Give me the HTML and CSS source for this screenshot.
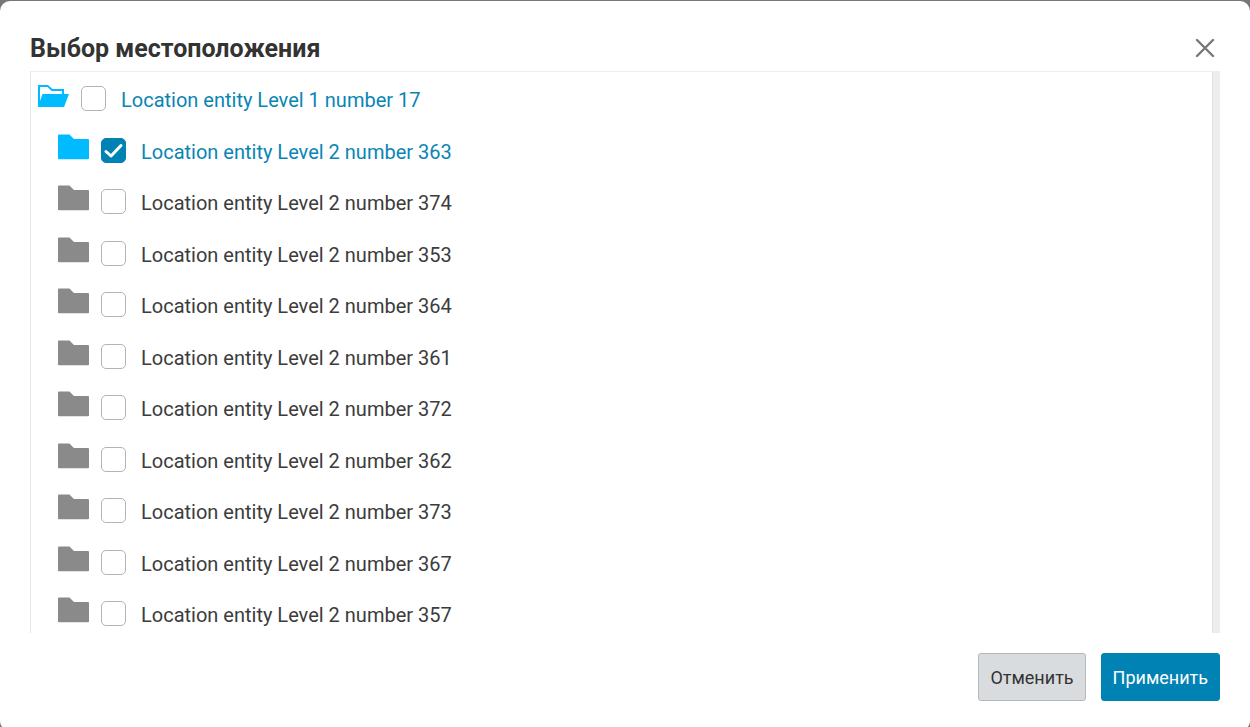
FILE: index.html
```html
<!DOCTYPE html>
<html lang="ru">
<head>
  <meta charset="UTF-8" />
  <meta name="viewport" content="width=device-width, initial-scale=1.0"/>
  <title>Выбор местоположения</title>
  <link rel="stylesheet" href="styles.css">
</head>
<body>
  <svg class="sprite" aria-hidden="true">
    <symbol id="folder" viewBox="0 0 31 26">
      <path d="M1 0.5H11.5L16 5H30Q31 5 31 6V24.5Q31 25.2 30 25.2H1Q0 25.2 0 24.5V1.5Q0 0.5 1 0.5Z" fill="currentColor"/>
    </symbol>
    <symbol id="folder-open" viewBox="0 0 31 26">
      <path d="M0 3H10L14.5 7H26V12H31L26 25H0ZM2 5V19L4.5 12H24V9H13.5L9.5 5Z" fill="currentColor" fill-rule="evenodd"/>
    </symbol>
  </svg>

  <div class="modal" role="dialog" aria-labelledby="title">
    <header class="modal-header">
      <h1 id="title">Выбор местоположения</h1>
      <button class="close" type="button" aria-label="Закрыть">
        <svg width="20" height="20" viewBox="0 0 20 20"><path d="M2 2L18 18M18 2L2 18" stroke="currentColor" stroke-width="2.4" stroke-linecap="round"/></svg>
      </button>
    </header>

    <div class="tree-box">
      <ul class="tree">
        <li>
          <div class="row selected">
            <svg class="icon"><use href="#folder-open"/></svg>
            <input type="checkbox" id="loc17"><label for="loc17">Location entity Level 1 number 17</label>
          </div>
          <ul class="children">
            <li class="row selected">
              <svg class="icon"><use href="#folder"/></svg>
              <input type="checkbox" id="loc363" checked><label for="loc363">Location entity Level 2 number 363</label>
            </li>
            <li class="row">
              <svg class="icon"><use href="#folder"/></svg>
              <input type="checkbox" id="loc374"><label for="loc374">Location entity Level 2 number 374</label>
            </li>
            <li class="row">
              <svg class="icon"><use href="#folder"/></svg>
              <input type="checkbox" id="loc353"><label for="loc353">Location entity Level 2 number 353</label>
            </li>
            <li class="row">
              <svg class="icon"><use href="#folder"/></svg>
              <input type="checkbox" id="loc364"><label for="loc364">Location entity Level 2 number 364</label>
            </li>
            <li class="row">
              <svg class="icon"><use href="#folder"/></svg>
              <input type="checkbox" id="loc361"><label for="loc361">Location entity Level 2 number 361</label>
            </li>
            <li class="row">
              <svg class="icon"><use href="#folder"/></svg>
              <input type="checkbox" id="loc372"><label for="loc372">Location entity Level 2 number 372</label>
            </li>
            <li class="row">
              <svg class="icon"><use href="#folder"/></svg>
              <input type="checkbox" id="loc362"><label for="loc362">Location entity Level 2 number 362</label>
            </li>
            <li class="row">
              <svg class="icon"><use href="#folder"/></svg>
              <input type="checkbox" id="loc373"><label for="loc373">Location entity Level 2 number 373</label>
            </li>
            <li class="row">
              <svg class="icon"><use href="#folder"/></svg>
              <input type="checkbox" id="loc367"><label for="loc367">Location entity Level 2 number 367</label>
            </li>
            <li class="row">
              <svg class="icon"><use href="#folder"/></svg>
              <input type="checkbox" id="loc357"><label for="loc357">Location entity Level 2 number 357</label>
            </li>
          </ul>
        </li>
      </ul>
      <div class="track"></div>
    </div>

    <footer class="modal-footer">
      <button class="btn" type="button">Отменить</button>
      <button class="btn primary" type="button">Применить</button>
    </footer>
  </div>
</body>
</html>
```
FILE: styles.css
```css
* {
  box-sizing: border-box;
}
body {
  margin: 0;
  padding-top: 1px;
  height: 100vh;
  overflow: hidden;
  background: #777;
  color: #333;
  font-family: Roboto, sans-serif;
  font-size: 20px;
}
.sprite {
  display: none;
}
.modal {
  padding: 30px;
  background: #fff;
  border-radius: 10px;
}
.modal-header {
  display: flex;
  justify-content: space-between;
  align-items: center;
  height: 40px;
  padding-bottom: 6px;
}
h1 {
  margin: 0;
  padding-top: 2px;
  font-size: 25px;
  line-height: 32px;
  font-weight: 700;
}
.close {
  display: flex;
  margin-right: 5px;
  padding: 0;
  border: none;
  background: none;
  color: #777;
  cursor: pointer;
}
.tree-box {
  display: flex;
  height: calc(100vh - 165px);
  overflow: hidden;
  border-top: 1px solid #eee;
  border-left: 1px solid #e4e4e4;
}
ul {
  margin: 0;
  padding: 0;
  list-style: none;
}
.tree {
  flex: 1;
  padding: 1px 7px;
}
.track {
  width: 8px;
  background: #ebedee;
  border-left: 1px solid #dfe1e2;
}
.children {
  margin-top: 1px;
  padding-left: 20px;
}
.row {
  display: flex;
  align-items: center;
  height: 51px;
  color: #3c3c3c;
}
.row:nth-child(even) {
  margin-bottom: 1px;
}
.icon {
  width: 31px;
  height: 26px;
  margin: 0 12px 7px 0;
  color: #8a8a8a;
}
.selected {
  color: #0885b5;
}
.selected .icon {
  color: #0bf;
}
input {
  appearance: none;
  width: 25px;
  height: 25px;
  margin: 0 15px 0 0;
  border: 1px solid #b3b3b3;
  border-radius: 5px;
  background: #fff;
}
input:checked {
  border-color: #0082b4;
  background: #0082b4 url("data:image/svg+xml,%3Csvg xmlns='http://www.w3.org/2000/svg' viewBox='0 0 23 23'%3E%3Cpath d='M4 12.5L9 17L19 6.5' fill='none' stroke='white' stroke-width='3' stroke-linecap='round' stroke-linejoin='round'/%3E%3C/svg%3E") center no-repeat;
}
label {
  padding-top: 3px;
  line-height: 24px;
}
.modal-footer {
  display: flex;
  justify-content: flex-end;
  gap: 15px;
  padding-top: 20px;
}
.btn {
  height: 48px;
  padding: 0 11px;
  border: 1px solid #b5b8ba;
  border-radius: 3px;
  background: #d9dcdf;
  color: #333;
  font-family: inherit;
  font-size: 18px;
  cursor: pointer;
}
.btn.primary {
  border-color: #0082b4;
  background: #0082b4;
  color: #fff;
}
```
